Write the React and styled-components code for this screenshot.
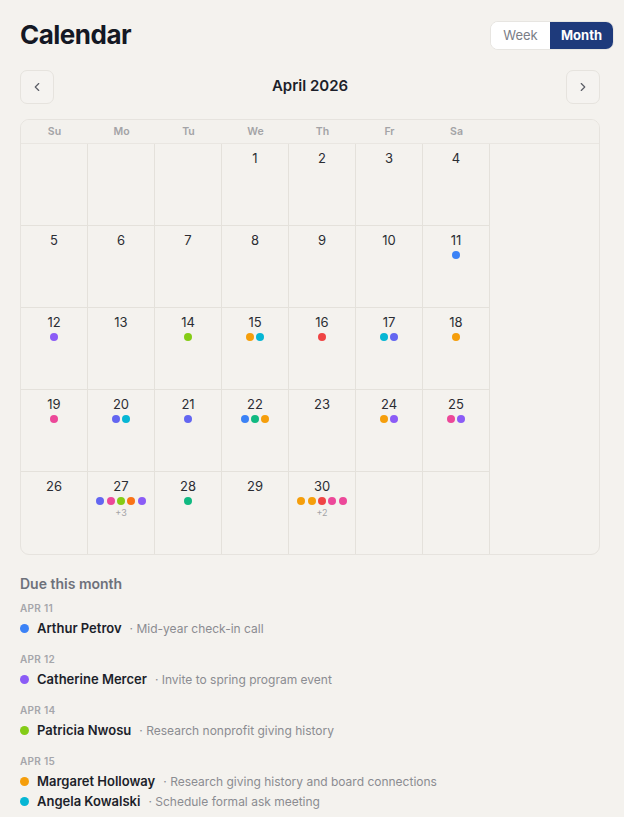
import React from "react";
import styled, { createGlobalStyle } from "styled-components";

const GlobalStyle = createGlobalStyle`
  * { box-sizing: border-box; }
  html, body { margin: 0; padding: 0; background: #f4f2ee; }
  body {
    font-family: Inter, "Noto Sans", "Liberation Sans", sans-serif;
    color: #1c1f2a;
    -webkit-font-smoothing: antialiased;
  }
`;

const C = {
  blue: "#3b82f6",
  violet: "#8b5cf6",
  lime: "#84cc16",
  amber: "#f59e0b",
  cyan: "#06b6d4",
  red: "#ef4444",
  pink: "#ec4899",
  indigo: "#6366f1",
  emerald: "#10b981",
  orange: "#f97316",
};

const Page = styled.div`
  padding: 21px 10px 20px 20px;
`;

const TopBar = styled.header`
  display: flex;
  align-items: center;
  justify-content: space-between;
  height: 28px;
`;

const Title = styled.h1`
  margin: 0;
  font-size: 26px;
  line-height: 28px;
  font-weight: 700;
  letter-spacing: -0.5px;
  color: #141824;
`;

const Toggle = styled.div`
  display: flex;
  height: 29px;
  border: 1px solid #e7e5e1;
  border-radius: 8px;
  overflow: hidden;
  background: #fff;
`;

const ToggleButton = styled.button`
  border: 0;
  margin: 0;
  width: ${(p) => (p.$active ? "63px" : "59px")};
  padding: 0;
  font-family: inherit;
  font-size: 13px;
  font-weight: ${(p) => (p.$active ? 700 : 400)};
  color: ${(p) => (p.$active ? "#ffffff" : "#7a7d86")};
  background: ${(p) => (p.$active ? "#1e3a7b" : "#ffffff")};
  cursor: pointer;
`;

const Main = styled.main`
  max-width: 580px;
`;

const NavRow = styled.div`
  display: flex;
  align-items: center;
  justify-content: space-between;
  margin-top: 21px;
`;

const NavButton = styled.button`
  width: 34px;
  height: 34px;
  display: flex;
  align-items: center;
  justify-content: center;
  padding: 0;
  border: 1px solid #e6e3de;
  border-radius: 7px;
  background: #f5f3f0;
  color: #5b5e66;
  cursor: pointer;
`;

const MonthLabel = styled.div`
  font-size: 15px;
  line-height: 18px;
  margin-bottom: 2px;
  font-weight: 600;
  color: #1c1f2a;
`;

const CalendarBox = styled.section`
  margin-top: 15px;
  border: 1px solid #e6e3de;
  border-radius: 9px;
  overflow: hidden;
  background: #f4f2ee;
`;

const WeekHeader = styled.div`
  display: grid;
  grid-template-columns: repeat(7, 67px);
  height: 24px;
  align-items: center;
  border-bottom: 1px solid #e9e6e1;
  background: #f3f1ed;
`;

const WeekDay = styled.div`
  text-align: center;
  font-size: 10.5px;
  font-weight: 600;
  color: #a3a3a6;
`;

const DayGrid = styled.div`
  display: grid;
  grid-template-columns: repeat(7, 67px);
  grid-auto-rows: 82px;
`;

const Cell = styled.div`
  border-right: 1px solid #e4e1db;
  border-bottom: ${(p) => (p.$lastRow ? "0" : "1px solid #e4e1db")};
  display: flex;
  flex-direction: column;
  align-items: center;
  padding-top: 6px;
`;

const DayNum = styled.div`
  font-size: 13px;
  line-height: 16px;
  font-weight: 400;
  color: #2b2d33;
`;

const Dots = styled.div`
  display: flex;
  gap: 2.4px;
  margin-top: 3px;
`;

const Dot = styled.span`
  width: 8px;
  height: 8px;
  border-radius: 50%;
  background: ${(p) => p.$c};
`;

const More = styled.div`
  margin-top: 2px;
  font-size: 9px;
  line-height: 11px;
  color: #a3a3a6;
`;

const DueSection = styled.section`
  margin-top: 20px;
`;

const DueTitle = styled.h2`
  margin: 0;
  font-size: 14px;
  line-height: 18px;
  font-weight: 600;
  color: #6e717b;
`;

const Group = styled.div`
  margin-top: ${(p) => (p.$first ? "8px" : "14px")};
`;

const GroupDate = styled.div`
  font-size: 10px;
  line-height: 14px;
  font-weight: 600;
  letter-spacing: 0.3px;
  color: #a5a6aa;
  text-transform: uppercase;
`;

const Items = styled.div`
  margin-top: 3px;
  display: flex;
  flex-direction: column;
`;

const Item = styled.div`
  display: flex;
  align-items: center;
  height: 20px;
`;

const ItemDot = styled.span`
  width: 9px;
  height: 9px;
  border-radius: 50%;
  background: ${(p) => p.$c};
  margin-right: 8px;
  flex: none;
`;

const Name = styled.span`
  font-size: 13px;
  font-weight: 600;
  color: #1c1f2a;
`;

const Desc = styled.span`
  margin-left: 8px;
  font-size: 12px;
  color: #8b8c91;
`;

const Chevron = ({ dir }) => (
  <svg width="14" height="14" viewBox="0 0 24 24" fill="none" stroke="currentColor" strokeWidth="2" strokeLinecap="round" strokeLinejoin="round">
    {dir === "left" ? <path d="M15 18l-6-6 6-6" /> : <path d="M9 18l6-6-6-6" />}
  </svg>
);

const events = {
  11: [C.blue],
  12: [C.violet],
  14: [C.lime],
  15: [C.amber, C.cyan],
  16: [C.red],
  17: [C.cyan, C.indigo],
  18: [C.amber],
  19: [C.pink],
  20: [C.indigo, C.cyan],
  21: [C.indigo],
  22: [C.blue, C.emerald, C.amber],
  24: [C.amber, C.violet],
  25: [C.pink, C.violet],
  27: [C.indigo, C.pink, C.lime, C.orange, C.violet, C.blue, C.cyan, C.red],
  28: [C.emerald],
  30: [C.amber, C.amber, C.red, C.pink, C.pink, C.blue, C.lime],
};

const due = [
  { date: "Apr 11", items: [{ c: C.blue, name: "Arthur Petrov", desc: "Mid-year check-in call" }] },
  { date: "Apr 12", items: [{ c: C.violet, name: "Catherine Mercer", desc: "Invite to spring program event" }] },
  { date: "Apr 14", items: [{ c: C.lime, name: "Patricia Nwosu", desc: "Research nonprofit giving history" }] },
  {
    date: "Apr 15",
    items: [
      { c: C.amber, name: "Margaret Holloway", desc: "Research giving history and board connections" },
      { c: C.cyan, name: "Angela Kowalski", desc: "Schedule formal ask meeting" },
    ],
  },
];

const weekdays = ["Su", "Mo", "Tu", "We", "Th", "Fr", "Sa"];

export default function App() {
  // April 2026 starts on a Wednesday
  const lead = 3;
  const days = 30;
  const cells = [];
  for (let i = 0; i < lead; i++) cells.push(null);
  for (let d = 1; d <= days; d++) cells.push(d);
  while (cells.length % 7) cells.push(null);
  const rows = cells.length / 7;

  return (
    <>
      <GlobalStyle />
      <Page>
        <TopBar>
          <Title>Calendar</Title>
          <Toggle>
            <ToggleButton>Week</ToggleButton>
            <ToggleButton $active>Month</ToggleButton>
          </Toggle>
        </TopBar>
        <Main>
          <NavRow>
            <NavButton aria-label="Previous month"><Chevron dir="left" /></NavButton>
            <MonthLabel>April 2026</MonthLabel>
            <NavButton aria-label="Next month"><Chevron dir="right" /></NavButton>
          </NavRow>
          <CalendarBox>
            <WeekHeader>
              {weekdays.map((w) => (
                <WeekDay key={w}>{w}</WeekDay>
              ))}
            </WeekHeader>
            <DayGrid>
              {cells.map((d, i) => {
                const ev = d ? events[d] || [] : [];
                const shown = ev.slice(0, 5);
                const extra = ev.length - shown.length;
                return (
                  <Cell key={i} $lastRow={Math.floor(i / 7) === rows - 1}>
                    {d && <DayNum>{d}</DayNum>}
                    {shown.length > 0 && (
                      <Dots>
                        {shown.map((c, j) => (
                          <Dot key={j} $c={c} />
                        ))}
                      </Dots>
                    )}
                    {extra > 0 && <More>+{extra}</More>}
                  </Cell>
                );
              })}
            </DayGrid>
          </CalendarBox>
          <DueSection>
            <DueTitle>Due this month</DueTitle>
            {due.map((g, gi) => (
              <Group key={g.date} $first={gi === 0}>
                <GroupDate>{g.date}</GroupDate>
                <Items>
                  {g.items.map((it) => (
                    <Item key={it.name}>
                      <ItemDot $c={it.c} />
                      <Name>{it.name}</Name>
                      <Desc>· {it.desc}</Desc>
                    </Item>
                  ))}
                </Items>
              </Group>
            ))}
          </DueSection>
        </Main>
      </Page>
    </>
  );
}
